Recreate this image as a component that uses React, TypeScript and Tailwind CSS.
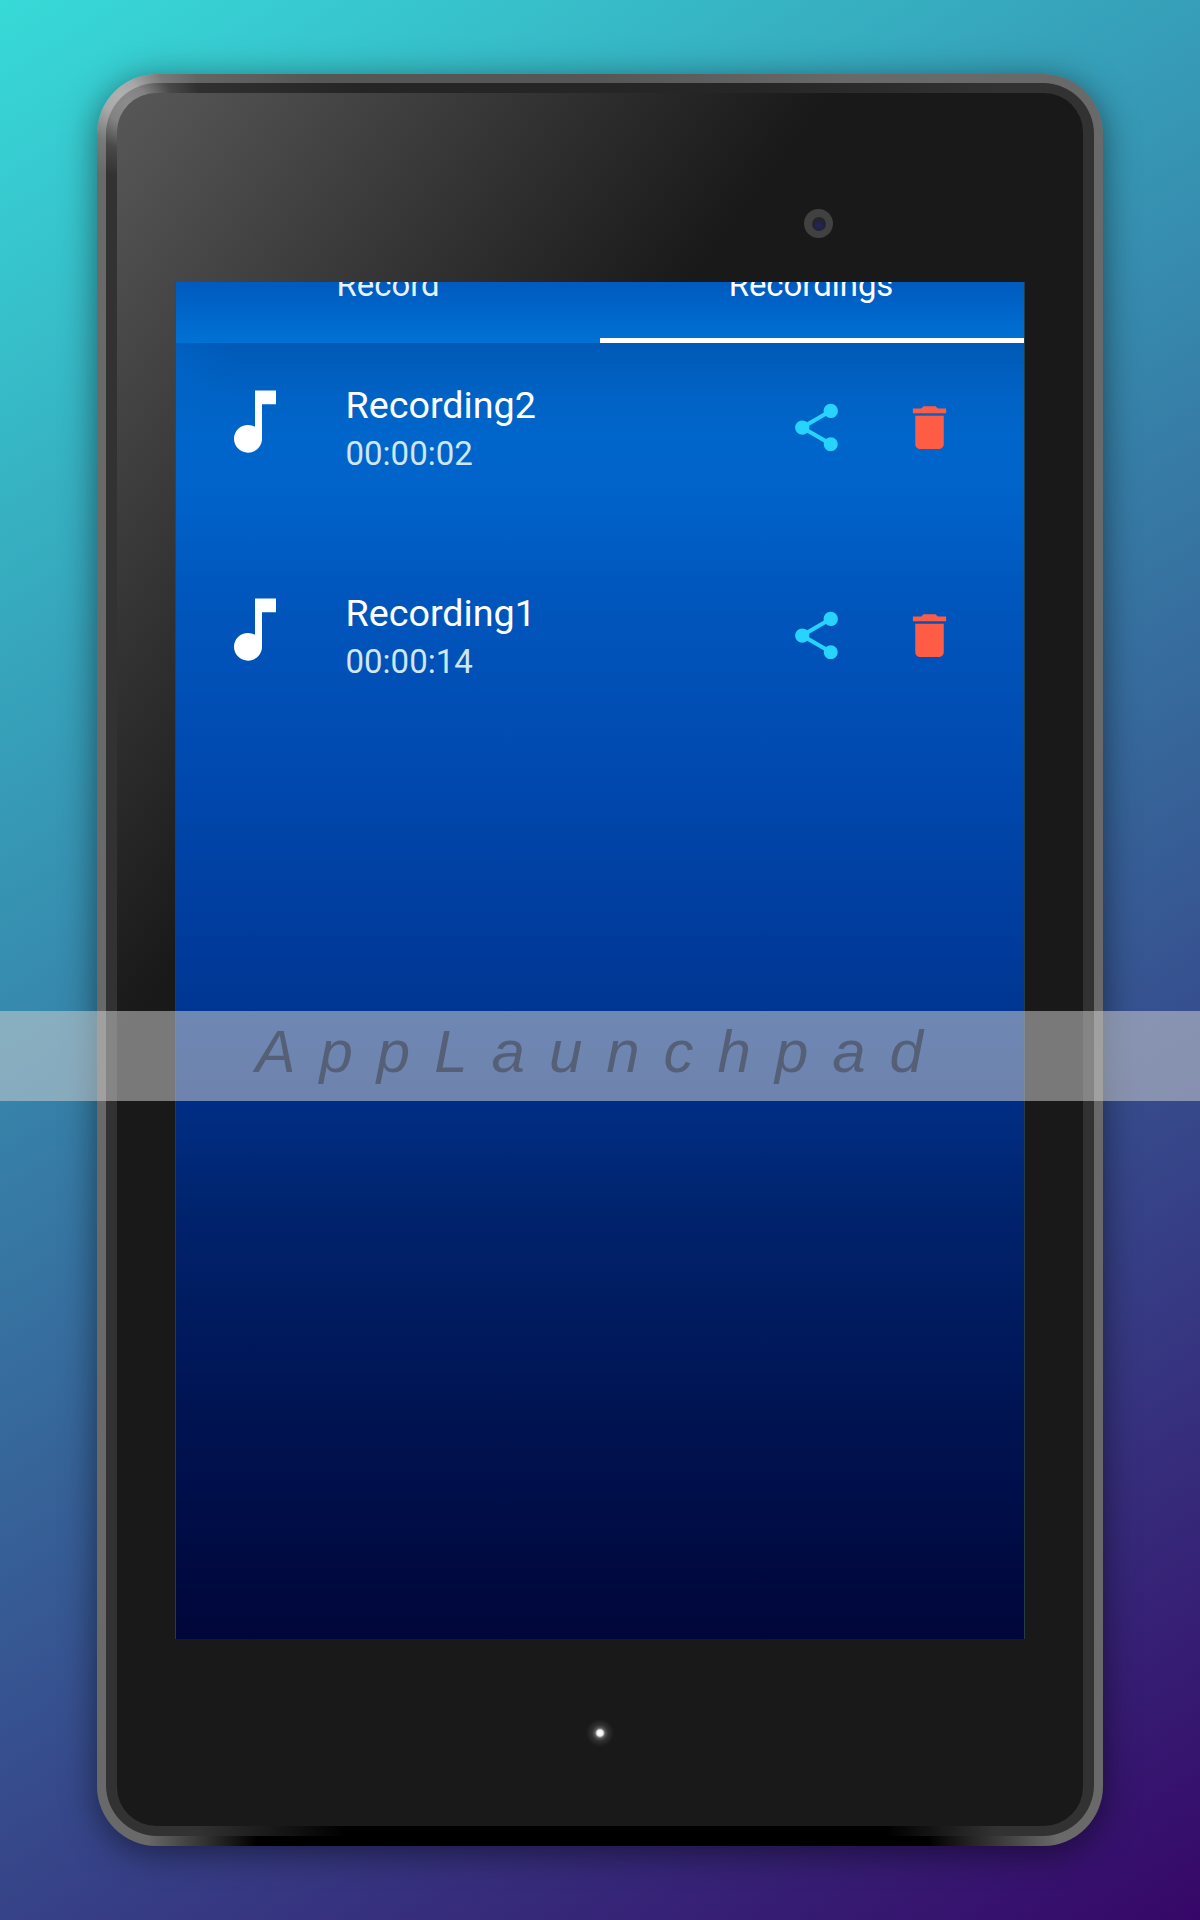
const recordings = [
  { name: 'Recording2', duration: '00:00:02' },
  { name: 'Recording1', duration: '00:00:14' },
];

function NoteIcon() {
  return (
    <svg className="-mt-px h-[83px] w-[84px] fill-white" viewBox="0 0 24 24" preserveAspectRatio="none">
      <path d="M12 3v10.55c-.59-.34-1.27-.55-2-.55-2.21 0-4 1.79-4 4s1.79 4 4 4 4-1.79 4-4V7h4V3h-6z" />
    </svg>
  );
}

function ShareIcon() {
  return (
    <svg className="size-[57px] fill-[#27d3ff]" viewBox="0 0 24 24">
      <path d="M18 16.08c-.76 0-1.44.3-1.96.77L8.91 12.7c.05-.23.09-.46.09-.7s-.04-.47-.09-.7l7.05-4.11c.54.5 1.25.81 2.04.81 1.66 0 3-1.34 3-3s-1.34-3-3-3-3 1.34-3 3c0 .24.04.47.09.7L8.04 9.81C7.5 9.31 6.79 9 6 9c-1.66 0-3 1.34-3 3s1.34 3 3 3c.79 0 1.5-.31 2.04-.81l7.12 4.16c-.05.21-.08.43-.08.65 0 1.61 1.31 2.92 2.92 2.92s2.92-1.31 2.92-2.92-1.31-2.92-2.92-2.92z" />
    </svg>
  );
}

function TrashIcon() {
  return (
    <svg className="size-[57px] fill-[#ff5c46]" viewBox="0 0 24 24">
      <path d="M6 19c0 1.1.9 2 2 2h8c1.1 0 2-.9 2-2V7H6v12zM19 4h-3.5l-1-1h-5l-1 1H5v2h14V4z" />
    </svg>
  );
}

function Tabs() {
  return (
    <div className="grid h-[61px] shrink-0 grid-cols-2 bg-linear-to-b from-[#005abf] to-[#0072d4] text-[32.9px] leading-9">
      <div className="flex flex-col items-center text-[#e6f2fc]">
        <span className="-mt-[15px]">Record</span>
      </div>
      <div className="flex flex-col items-center border-b-[5px] border-white text-white">
        <span className="-mt-[15px] -ml-[2px]">Recordings</span>
      </div>
    </div>
  );
}

function Row({ name, duration }: { name: string; duration: string }) {
  return (
    <li className="flex h-[207.5px] items-start pt-[38px] pl-[37px]">
      <NoteIcon />
      <div className="mt-[2px] ml-[48.5px] w-[442.5px]">
        <div className="text-[37.7px] leading-[44px] text-white">{name}</div>
        <div className="mt-[3.4px] text-[33px] leading-[48px] text-[#cfe7f3]">{duration}</div>
      </div>
      <div className="mt-[18px] flex gap-[56px]">
        <ShareIcon />
        <TrashIcon />
      </div>
    </li>
  );
}

function Screen() {
  return (
    <div className="mt-[189px] ml-[58px] flex h-[1357px] w-[850px] flex-col overflow-hidden border-x border-[#2d4a5a]/70 font-[Roboto,sans-serif]">
      <Tabs />
      <div className="grow bg-[radial-gradient(ellipse_60px_70px_at_0_20px,#0068cc80,#0068cc00),linear-gradient(180deg,#0059b6_0,#0062c4_50px,#0066cb_95px,#0063ca_150px,#0057bd_245px,#004cb3_392px,#0042a5_514px,#003896_645px,#002e85_759px,#00226b_881px,#001453_1065px,#000639_1296px)]">
        <ul>
          {recordings.map((recording) => (
            <Row key={recording.name} {...recording} />
          ))}
        </ul>
      </div>
    </div>
  );
}

export default function App() {
  return (
    <main className="relative h-[1920px] w-[1200px] overflow-hidden bg-[linear-gradient(148deg,#37dad8_0%,#360768_100%)] pt-[74px] pl-[97px]">
      <div className="h-[1772px] w-[1006px] rounded-[60px] bg-[radial-gradient(circle_at_22px_22px,#b0b0b0_0,#a8a8a8_18px,#8a8a8a80_46px,#6a6a6a00_80px),linear-gradient(90deg,#00000000_50px,#000_160px,#000_830px,#00000000_960px),linear-gradient(90deg,#69696900_60px,#565656_220px,#565656_500px,#69696900_750px),linear-gradient(#696969,#696969)] bg-[size:100%_100%,100%_12px,100%_12px,100%_100%] bg-[position:0_0,0_100%,0_0,0_0] bg-no-repeat p-[9px] pb-[10px] shadow-[0_6px_34px_rgba(0,0,0,0.5)]">
        <div className="h-[1753px] w-[988px] rounded-[51px] bg-[radial-gradient(circle_at_22px_22px,#8c8c8c_0,#828282_20px,#60606080_44px,#32323200_72px),linear-gradient(90deg,#00000000_90px,#000_240px,#000_780px,#00000000_890px),linear-gradient(90deg,#32323200_60px,#252525_260px,#262626_650px,#32323200_900px),linear-gradient(#323232,#323232)] bg-[size:100%_100%,100%_12px,100%_12px,100%_100%] bg-[position:0_0,0_100%,0_0,0_0] bg-no-repeat pt-[10px] pl-[11px]">
          <div className="h-[1733px] w-[966px] overflow-hidden rounded-[39px] bg-[linear-gradient(127deg,#575757_0,#525252_60px,#191919_570px)]">
            <Screen />
            <div className="mt-[79px] ml-[468px] size-[30px] bg-[radial-gradient(circle,#fff_0,#eee_3px,#5a5a5a_5px,#303030_8px,#191919_14px)]" />
          </div>
        </div>
      </div>
      <div className="absolute top-[209px] left-[804px] flex size-[29px] items-center justify-center rounded-full bg-[#414141]">
        <div className="size-[14px] rounded-full bg-[radial-gradient(circle_at_50%_60%,#24245e_0,#22223a_5px,#252525_8px)]" />
      </div>
      <div className="absolute top-[1011px] left-0 h-[90px] w-full bg-[#d2d2d2]/[0.525] pl-[255.5px] font-['Liberation_Sans',Arial,sans-serif] text-[60px] leading-[81px] tracking-[23.98px] whitespace-nowrap text-[#424248]/55 italic">
        AppLaunchpad
      </div>
    </main>
  );
}
